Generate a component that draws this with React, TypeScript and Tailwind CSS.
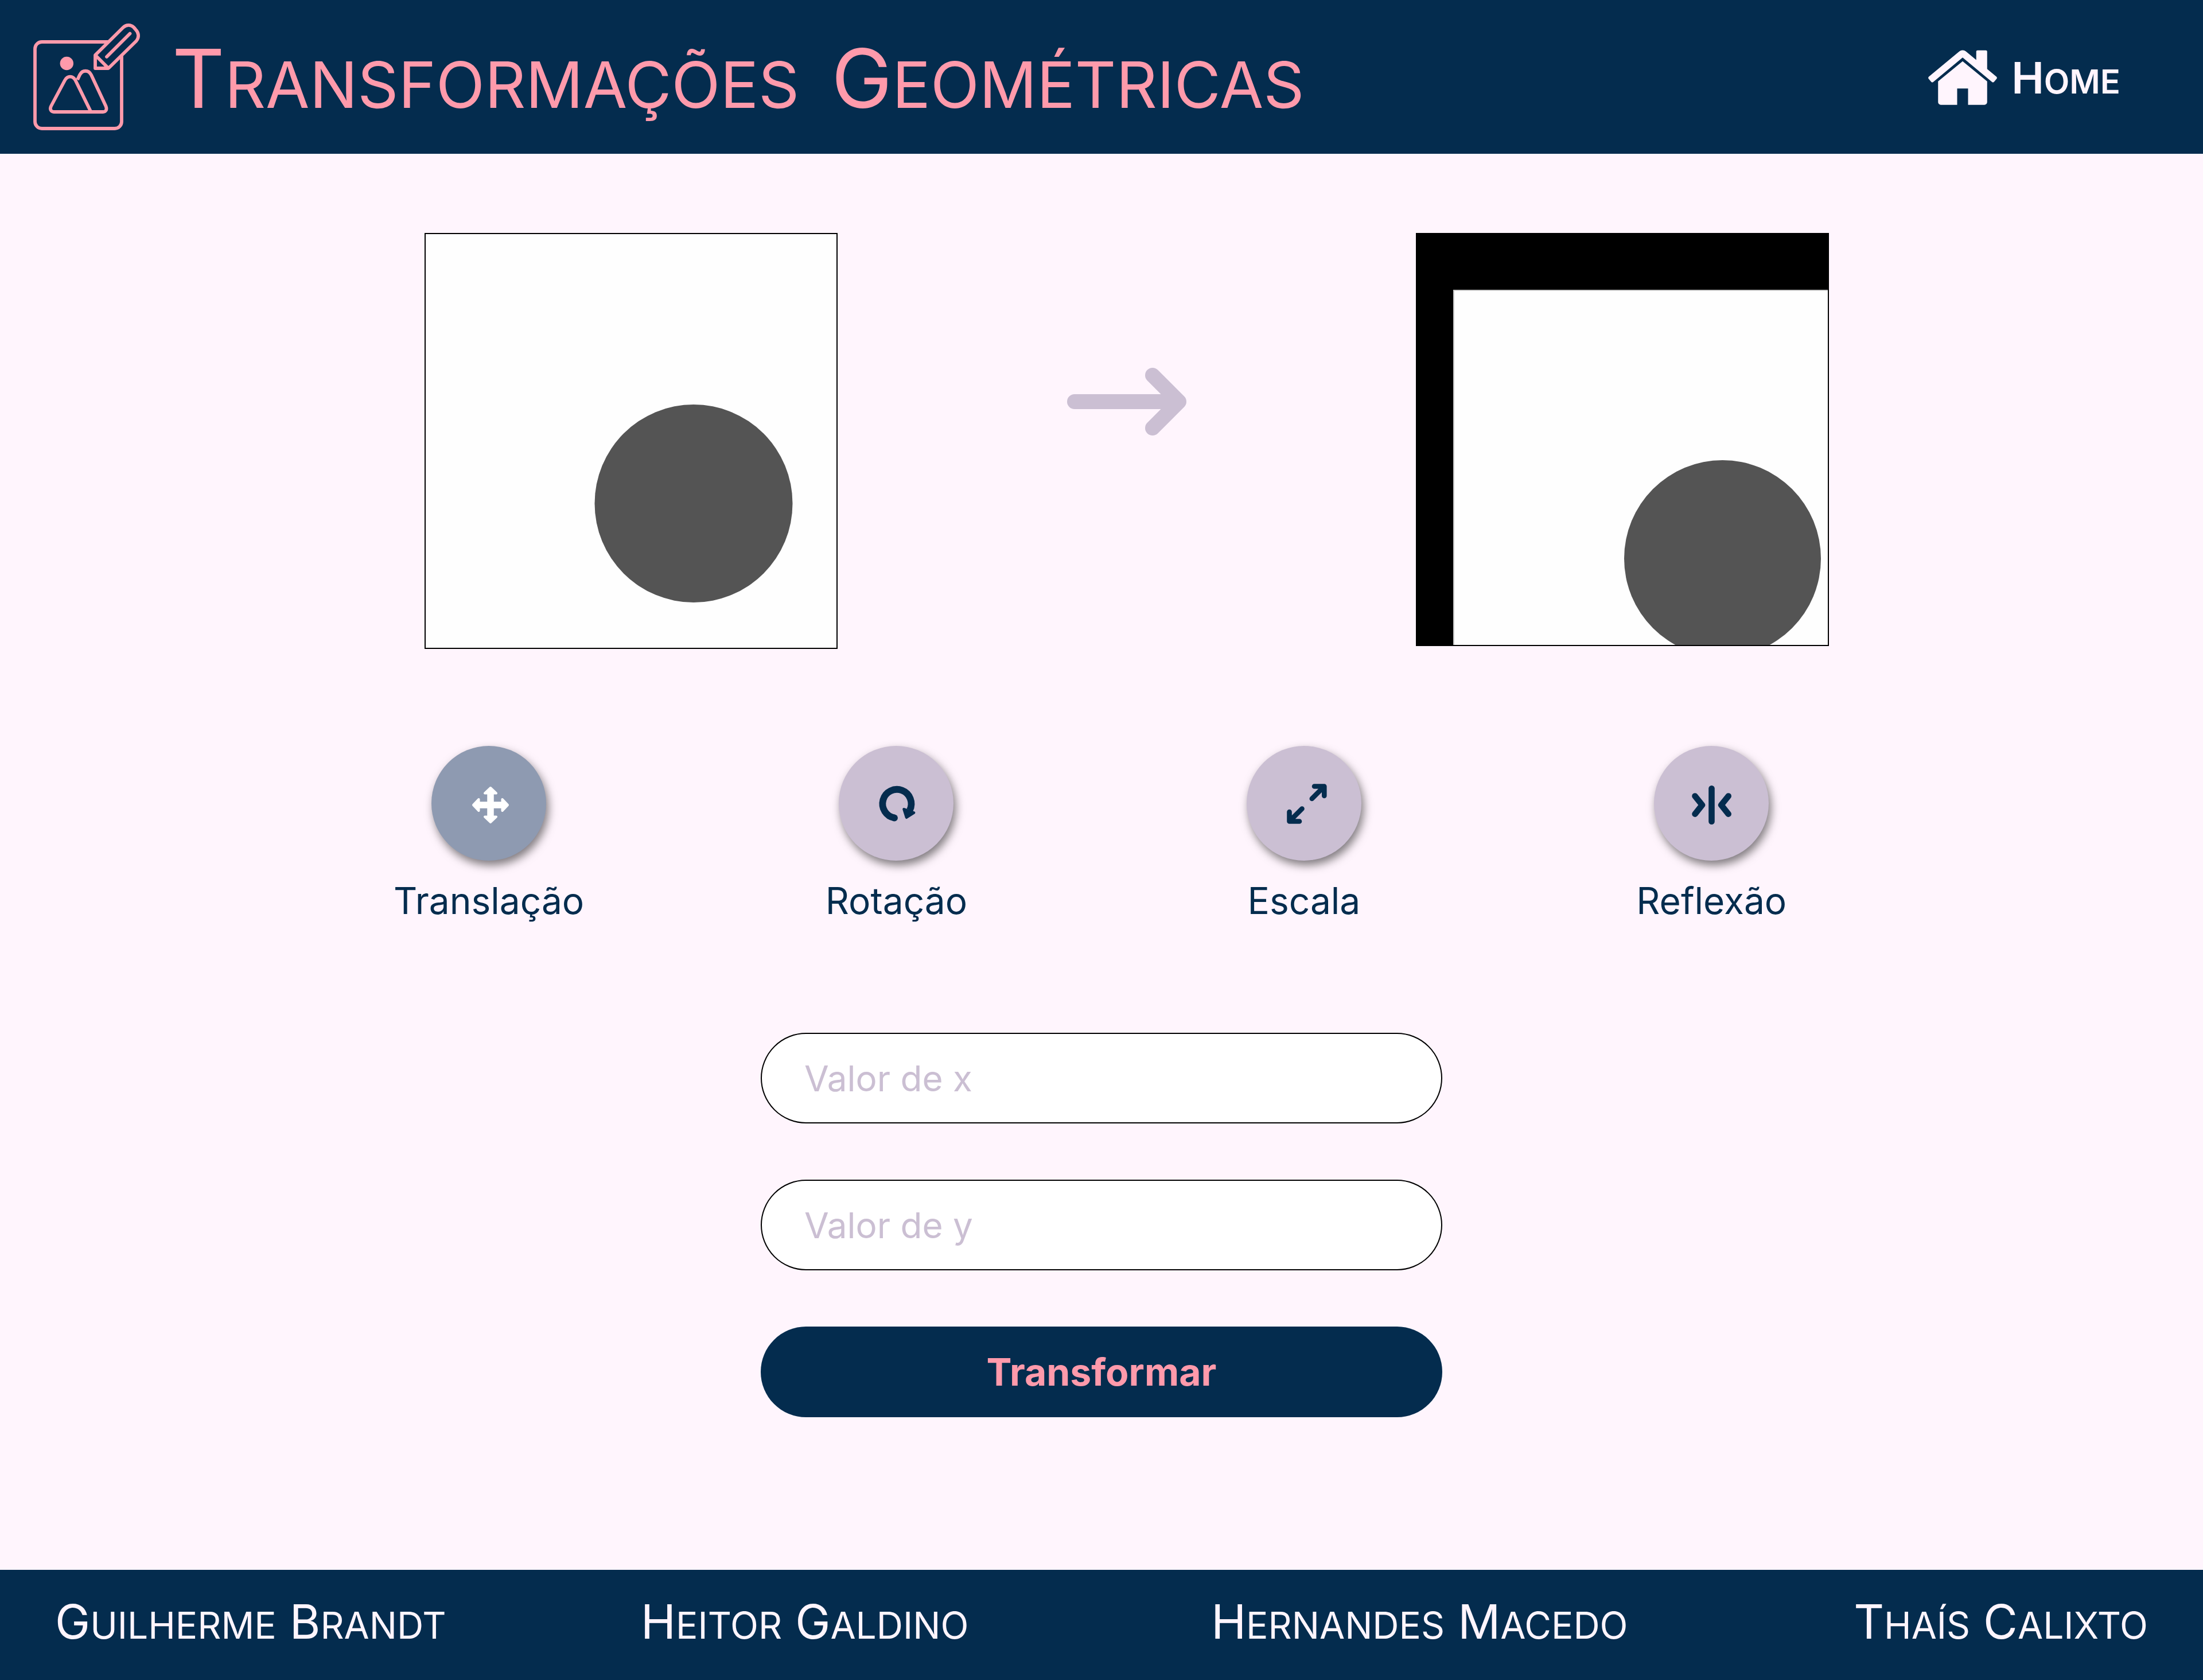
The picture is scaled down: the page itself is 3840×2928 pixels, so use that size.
import { useState, type ReactNode } from 'react';

function Logo() {
  return (
    <svg
      className="h-[200px] w-[200px] shrink-0"
      viewBox="52 33 200 200"
      fill="none"
      stroke="currentColor"
      strokeWidth="5.8"
      strokeLinecap="butt"
      strokeLinejoin="round"
      aria-hidden="true"
    >
      <path d="M188 72 H73 A12 12 0 0 0 61 84 V211 A12 12 0 0 0 73 223 H200 A12 12 0 0 0 212 211 V97" />
      <path d="M166 95 L214.500 47 C220 41.500 228 41.500 233 46.500 L236 50 C242 56 243 64 237.500 70.500 L189 118 H166 Z" />
      <path d="M166 95 L189 118" />
      <path d="M186 98 L226.500 57.500" strokeLinecap="round" />
      <circle cx="116.300" cy="109.500" r="11.700" fill="currentColor" stroke="none" />
      <path d="M158.500 194 H94 C88.500 194 86.500 189 89 184 L113 139 C117.500 130.500 127 130.500 131.500 139 Z" />
      <path d="M135 138 L139 129.500 C143.500 120.500 154.500 120.500 159 129.500 L184.500 184 C187 190 184.500 194 179.500 194 H157" />
    </svg>
  );
}

function HomeIcon() {
  return (
    <svg className="h-[98px] w-[122px] shrink-0" viewBox="13 220 1638 1320" fill="currentColor" aria-hidden="true">
      <path d="M1408 992v480q0 26-19 45t-45 19h-384v-384h-256v384h-384q-26 0-45-19t-19-45v-480q0-1 .5-3t.5-3l575-474 575 474q1 2 1 6zm223-69l-62 74q-8 9-21 11h-3q-13 0-21-7l-692-577-692 577q-12 8-24 7-13-2-21-11l-62-74q-8-10-7-23.500t11-21.500l719-599q32-26 76-26t76 26l244 204v-195q0-14 9-23t23-9h192q14 0 23 9t9 23v408l219 182q10 8 11 21.500t-7 23.500z" />
    </svg>
  );
}

function ArrowIcon() {
  return (
    <svg
      className="mt-[234px] h-[120px] w-[208px] shrink-0 text-[#cbbfd3]"
      viewBox="0 0 208 120"
      fill="none"
      stroke="currentColor"
      strokeWidth="26"
      strokeLinecap="round"
      strokeLinejoin="round"
      role="img"
      aria-label="resulta em"
    >
      <path d="M13 60 H195 M149 14 L195 60 L149 106" />
    </svg>
  );
}

function MoveIcon() {
  return (
    <svg className="size-full" viewBox="0 0 200 200" fill="none" stroke="currentColor" aria-hidden="true">
      <path d="M103 80 V126 M80 103 H126" strokeWidth="11.500" />
      <g fill="currentColor" strokeWidth="4" strokeLinejoin="round">
        <path d="M103 73 L113 82.500 H93 Z" />
        <path d="M103 133 L113 123.500 H93 Z" />
        <path d="M73 103 L82.500 93 V113 Z" />
        <path d="M133 103 L123.500 93 V113 Z" />
      </g>
    </svg>
  );
}

function RotateIcon() {
  return (
    <svg className="size-full" viewBox="0 0 200 200" fill="none" stroke="currentColor" aria-hidden="true">
      <path d="M97 125.500 A25 25 0 1 1 123.800 112" strokeWidth="11.800" />
      <circle cx="97" cy="125.500" r="5.900" fill="currentColor" stroke="none" />
      <path d="M113.800 110.500 L130.800 116.500 L118.200 124.500 Z" fill="currentColor" strokeWidth="5" strokeLinejoin="round" />
    </svg>
  );
}

function ScaleIcon() {
  return (
    <svg
      className="size-full"
      viewBox="0 0 200 200"
      fill="none"
      stroke="currentColor"
      strokeWidth="8.600"
      strokeLinecap="round"
      strokeLinejoin="round"
      aria-hidden="true"
    >
      <path d="M118 70.500 H135.300 V87 M135.300 70.500 L113.800 92" />
      <path d="M92 131.500 H74.500 V115 M74.500 131.500 L96.500 109.500" />
    </svg>
  );
}

function ReflectIcon() {
  return (
    <svg
      className="size-full"
      viewBox="0 0 200 200"
      fill="none"
      stroke="currentColor"
      strokeWidth="10.600"
      strokeLinecap="round"
      strokeLinejoin="round"
      aria-hidden="true"
    >
      <path d="M100.500 74.300 V131.700" />
      <path d="M71.500 87.500 L84 103 L71.500 118.700" />
      <path d="M129.700 87.500 L117.200 103 L129.700 118.700" />
    </svg>
  );
}

function SourceImage() {
  return (
    <div className="h-[725px] w-[720px] shrink-0 border-2 border-black bg-[#fefefe]">
      <svg className="size-full" viewBox="0 0 716 721" role="img" aria-label="Imagem original">
        <circle cx="467" cy="469.500" r="172.500" fill="#545454" />
      </svg>
    </div>
  );
}

function ResultImage() {
  return (
    <div className="h-[720px] w-[720px] shrink-0 border-2 border-black bg-black">
      <svg className="size-full" viewBox="0 0 716 716" role="img" aria-label="Imagem transformada">
        <rect x="63" y="97" width="653" height="619" fill="#c8c8c8" />
        <rect x="65" y="99" width="651" height="617" fill="#fefefe" />
        <circle cx="532.500" cy="565.500" r="171.500" fill="#545454" />
      </svg>
    </div>
  );
}

const transforms: { id: string; label: string; icon: ReactNode }[] = [
  { id: 'translacao', label: 'Translação', icon: <MoveIcon /> },
  { id: 'rotacao', label: 'Rotação', icon: <RotateIcon /> },
  { id: 'escala', label: 'Escala', icon: <ScaleIcon /> },
  { id: 'reflexao', label: 'Reflexão', icon: <ReflectIcon /> },
];

const authors = [
  ['Guilherme', 'Brandt'],
  ['Heitor', 'Galdino'],
  ['Hernandes', 'Macedo'],
  ['Thaís', 'Calixto'],
];

const field =
  'h-[158px] w-full rounded-full border-2 border-black bg-white px-[74px] text-[62px] text-[#042c4e] placeholder:text-[#cbbfd3]';

export default function App() {
  const [selected, setSelected] = useState('translacao');

  return (
    <div className="flex min-h-screen flex-col bg-[#fff5fd] font-['Inter','Liberation_Sans',sans-serif] text-[#042c4e]">
      <header className="flex h-[268px] items-center justify-between bg-[#042c4e] pr-36 pl-[52px]">
        <div className="flex items-center gap-12 text-[#ff9aab]">
          <Logo />
          <h1 className="flex gap-14 pt-4 text-[111px] leading-[140px] uppercase">
            <span className="inline-block first-letter:text-[142px]">Transformações</span>
            <span className="inline-block first-letter:text-[142px]">Geométricas</span>
          </h1>
        </div>
        <a href="#" className="flex items-center gap-6 text-[#fff5fd]">
          <HomeIcon />
          <span className="inline-block pt-2 text-[58px] leading-[76px] font-semibold uppercase first-letter:text-[76px]">
            Home
          </span>
        </a>
      </header>

      <main className="flex flex-1 flex-col pt-[138px]">
        <div className="flex items-start justify-between pr-[16.98%] pl-[19.27%]">
          <SourceImage />
          <ArrowIcon />
          <ResultImage />
        </div>

        <div className="mt-[169px] grid grid-cols-4 pr-[13.06%] pl-[12.94%]">
          {transforms.map(({ id, label, icon }) => (
            <div key={id} className="flex flex-col items-center gap-[30px]">
              <button
                type="button"
                aria-labelledby={id}
                aria-pressed={selected === id}
                onClick={() => setSelected(id)}
                className={
                  selected === id
                    ? 'size-[200px] rounded-full bg-[#8e9ab1] text-white shadow-[4px_8px_16px_rgba(0,0,0,0.5)]'
                    : 'size-[200px] rounded-full bg-[#cbbfd3] text-[#042c4e] shadow-[4px_8px_16px_rgba(0,0,0,0.5)]'
                }
              >
                {icon}
              </button>
              <span id={id} className="text-[64px] leading-[80px]">
                {label}
              </span>
            </div>
          ))}
        </div>

        <form
          className="mx-auto mt-[190px] flex w-[1188px] max-w-full flex-col gap-[98px] pb-20"
          onSubmit={(event) => event.preventDefault()}
        >
          <input type="text" aria-label="Valor de x" placeholder="Valor de x" className={field} />
          <input type="text" aria-label="Valor de y" placeholder="Valor de y" className={field} />
          <button
            type="submit"
            className="h-[158px] w-full rounded-full bg-[#042c4e] text-[66px] font-bold text-[#ff9aab]"
          >
            Transformar
          </button>
        </form>
      </main>

      <footer className="grid h-48 grid-cols-[1022fr_995fr_1121fr_auto] items-center bg-[#042c4e] px-24 pb-1 text-[82px] leading-[96px] text-[#fff5fd]">
        {authors.map(([first, last]) => (
          <p key={first} className="whitespace-nowrap">
            <span className="inline-block text-[64px] uppercase first-letter:text-[82px]">{first}</span>{' '}
            <span className="inline-block text-[64px] uppercase first-letter:text-[82px]">{last}</span>
          </p>
        ))}
      </footer>
    </div>
  );
}
